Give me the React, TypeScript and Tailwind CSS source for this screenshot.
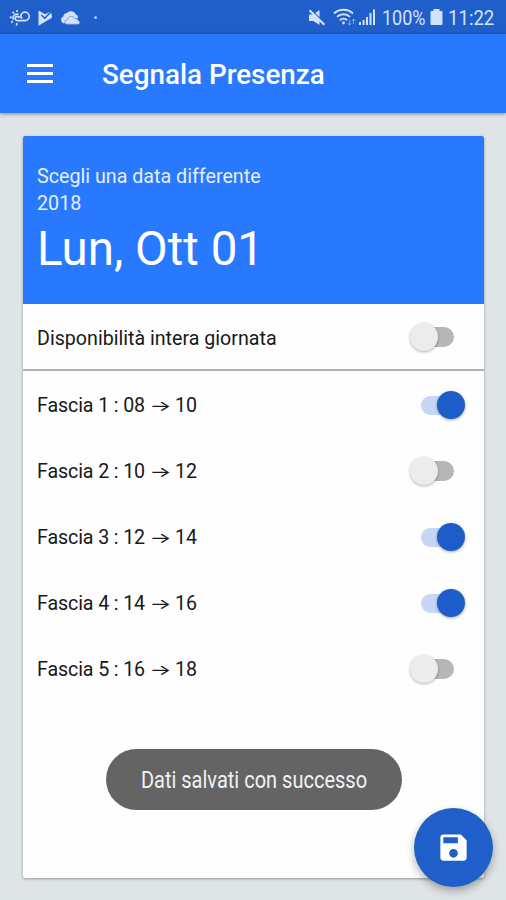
import React from "react";

const slots = [
  { n: 1, from: "08", to: "10", on: true },
  { n: 2, from: "10", to: "12", on: false },
  { n: 3, from: "12", to: "14", on: true },
  { n: 4, from: "14", to: "16", on: true },
  { n: 5, from: "16", to: "18", on: false },
];

function Toggle({ on }: { on: boolean }) {
  return on ? (
    <div className="mr-[19px] flex h-[19px] w-[44px] items-center justify-end rounded-full bg-[linear-gradient(90deg,#c7d6f4_75%,transparent_75%)]">
      <div className="h-7 w-7 shrink-0 rounded-full bg-[#1d5dc9] shadow-[0_1px_3px_rgba(0,0,0,0.35)]" />
    </div>
  ) : (
    <div className="mr-[30px] flex h-[20px] w-[44px] items-center rounded-full bg-[linear-gradient(90deg,transparent_25%,#b7b7b7_25%)]">
      <div className="h-7 w-7 shrink-0 rounded-full bg-[#ececec] shadow-[0_1px_3px_rgba(0,0,0,0.3)]" />
    </div>
  );
}

function StatusBar() {
  return (
    <div className="flex h-[34px] items-center bg-[#205ec9] pt-px text-[#d3e2fb]">
      <svg className="ml-[9px] h-5 w-[22px]" viewBox="0 0 22 20" fill="none" stroke="currentColor" strokeWidth="1.7">
        <path d="M8.3 12.6H16a4.2 4.2 0 1 0-4.2-4.4M8.3 12.6a2.1 2.1 0 1 1 1.6-3.5c1.5-.8 2.8.1 3 1.5" />
        <path d="M4.6 11.6a3.7 3.7 0 0 1 5-5M8.1 2v2M3.5 3.9l1.5 1.5M.7 9.3h2.2M2.2 14.5l1.6-1.2M7.7 15v2.4" />
      </svg>
      <svg className="ml-[6px] h-5 w-[17px]" viewBox="0 0 17 20">
        <path d="M1.5 2.5 8 6.3l6-2.8 1 5.2-.5 1.3L1.5 17.7Z" fill="currentColor" />
        <path d="m4.4 7 3.3 3.2 6.8-6.8" fill="none" stroke="#205ec9" strokeWidth="1.4" />
      </svg>
      <svg className="ml-[6px] h-5 w-[21px]" viewBox="0 0 21 20" fill="currentColor">
        <path d="M3.8 15.5a3.7 3.7 0 0 1-.5-7A4.2 4.2 0 0 1 7 5a5.3 5.3 0 0 1 8.9 1.6c1.3.3 2 1.8 2.3 3.5Z" />
        <path d="M7.1 16.3c-3.3 0-3.1-4.5.3-4.5.3-3.8 5.7-4.6 7.2-1.2 2.4-.5 3.4.8 3.5 2.1 2.4.4 2 3.6-.2 3.6Z" stroke="#5f8ddb" strokeWidth=".8" />
      </svg>
      <span className="ml-[13px] h-[3px] w-[3px] rounded-full bg-[#a7c8f8]" />
      <svg className="ml-auto h-5 w-[18px]" viewBox="0 0 18 20" fill="currentColor">
        <path d="M1 6.5h4.2L11.5 2v15L5.2 13H1Z" />
        <path d="m2.6 1.2 14 14" stroke="#205ec9" strokeWidth="1.4" />
        <path d="m1.5 2.3 14.9 14.4" stroke="currentColor" strokeWidth="2.2" />
      </svg>
      <svg className="ml-[7px] h-5 w-[24px]" viewBox="0 0 24 20" fill="none" stroke="currentColor" strokeWidth="1.9">
        <path d="M1 5.5c5.3-5 13.7-5 19 0M4 8.9c3.7-3.5 9.3-3.5 13 0M7 12.2c2-1.9 5-1.9 7 0" />
        <circle cx="10.5" cy="15" r="1.4" fill="currentColor" stroke="none" />
        <path d="M16.5 17v-5m-1.8 3 1.8 2 1.8-2M20.5 11v5m-1.8-3 1.8-2 1.8 2" strokeWidth="1" opacity=".5" />
      </svg>
      <svg className="ml-[1px] h-5 w-[18px]" viewBox="0 0 18 20" fill="currentColor">
        <path d="M1 14h2v3H1zM4.6 12h2v5h-2zM8 9h2v8H8zM11.5 5h2v12h-2zM15 1.5h2V17h-2z" />
      </svg>
      <span className="ml-[6px] w-[45px] whitespace-nowrap text-[20px] leading-5">
        <span className="inline-block origin-left scale-x-[0.9]">100%</span>
      </span>
      <svg className="ml-[3px] h-5 w-[13px]" viewBox="0 0 13 20" fill="currentColor">
        <path d="M3.5 1h6v2h2q1 0 1 1v12q0 1-1 1h-10q-1 0-1-1V4q0-1 1-1h2Z" />
      </svg>
      <span className="ml-[5px] w-[58px] whitespace-nowrap text-[20px] leading-5">
        <span className="inline-block origin-left scale-x-[0.93]">11:22</span>
      </span>
    </div>
  );
}

export default function App() {
  return (
    <div className="relative flex h-[900px] w-[506px] flex-col overflow-hidden bg-[#dfe4e6] font-[Roboto,sans-serif]">
      <StatusBar />
      <header className="flex h-[79px] shrink-0 items-center bg-[#2979ff] shadow-[0_1px_4px_rgba(0,0,0,0.4)]">
        <div className="ml-[27px] flex w-[26px] flex-col gap-[5px]">
          <span className="h-[3px] bg-white" />
          <span className="h-[3px] bg-white" />
          <span className="h-[3px] bg-white" />
        </div>
        <h1 className="ml-[49px] whitespace-nowrap pt-[2px] text-[27.8px] font-medium leading-8 text-white">Segnala Presenza</h1>
      </header>
      <main className="mx-[23px] mt-[23px] flex h-[742px] w-[461px] flex-col overflow-hidden rounded-[2px] bg-[#fefefe] shadow-[0_1px_3px_rgba(0,0,0,0.35)]">
        <section className="h-[168px] shrink-0 bg-[#2979ff] pl-[14px] pt-[27px] text-white">
          <p className="text-[19.7px] leading-[27px] text-[#e3eeff]">Scegli una data differente</p>
          <p className="text-[19.7px] leading-[27px] text-[#e3eeff]">2018</p>
          <p className="text-[47.5px] leading-[65px]">Lun, Ott 01</p>
        </section>
        <div className="flex h-[67px] shrink-0 items-center justify-between border-b-2 border-[#b0b3b3] pl-[14px] pt-px text-[19.65px] text-[#181818]">
          <span className="pt-[3px]">Disponibilità intera giornata</span>
          <Toggle on={false} />
        </div>
        <div className="pt-px">
          {slots.map((s) => (
            <div key={s.n} className="flex h-[66px] items-center justify-between pl-[14px] text-[19.65px] text-[#181818]">
              <span className="flex items-center whitespace-pre pt-[2px]">
                <span className="w-[110px] tracking-[-0.12px]">Fascia {s.n} : {s.from}</span>
                <span className="ml-[4px] mr-[5px] w-[19px] scale-x-[1.6] text-center font-[Inter,sans-serif] text-[14.5px] leading-5">→</span>
                <span>{s.to}</span>
              </span>
              <Toggle on={s.on} />
            </div>
          ))}
        </div>
      </main>
      <div className="absolute left-[106px] top-[749px] flex h-[61px] w-[296px] items-center justify-center rounded-full bg-[#646464] pt-[3px] text-[#f1f1f1]">
        <span className="scale-x-[0.87] whitespace-nowrap text-[23px]">Dati salvati con successo</span>
      </div>
      <button className="absolute left-[414px] top-[808px] flex h-[79px] w-[79px] items-center justify-center rounded-full bg-[#205ec9] shadow-[0_4px_8px_rgba(0,0,0,0.3)]">
        <svg className="h-[35px] w-[35px]" viewBox="0 0 24 24" fill="white">
          <path d="M17 3H5c-1.11 0-2 .9-2 2v14c0 1.1.89 2 2 2h14c1.1 0 2-.9 2-2V7l-4-4zm-5 16c-1.66 0-3-1.34-3-3s1.34-3 3-3 3 1.34 3 3-1.34 3-3 3zm3-10H5V5h10v4z" />
        </svg>
      </button>
    </div>
  );
}
